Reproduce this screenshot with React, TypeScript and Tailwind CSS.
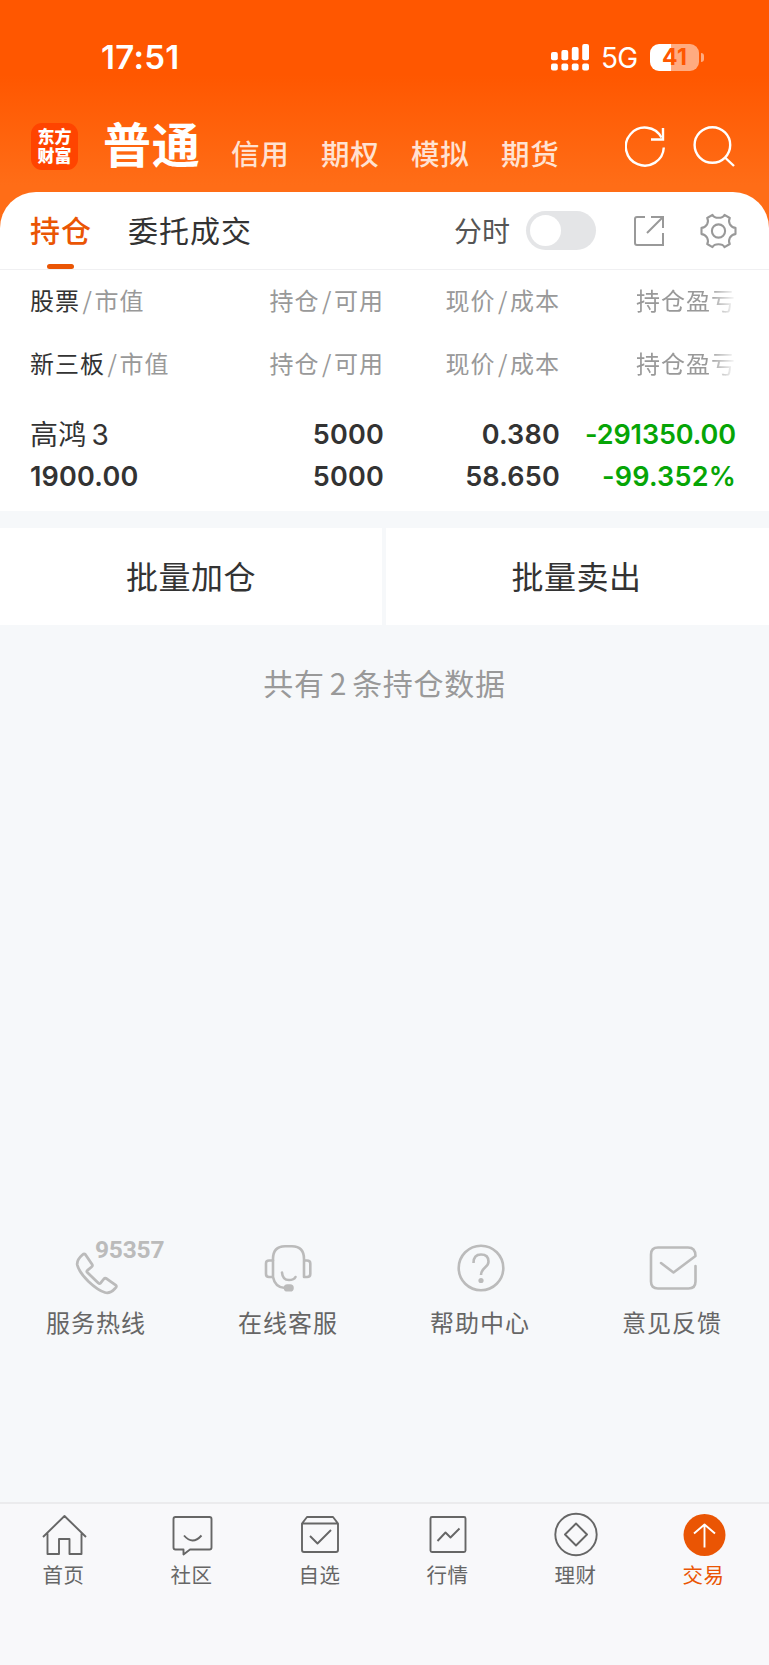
import { FC, ReactNode } from "react"
import clsx from "clsx"

const ACCOUNT_TABS = ["信用", "期权", "模拟", "期货"]

interface PositionHeaderProps {
  title: string
  className?: string
}

const SignalIcon = () => (
  <svg width="38" height="27" viewBox="0 0 38 27" fill="white">
    <rect x="0" y="8" width="6.8" height="8.2" rx="2" />
    <rect x="10.4" y="6" width="6.8" height="10.2" rx="2" />
    <rect x="20.8" y="3" width="6.8" height="13.2" rx="2" />
    <rect x="31.2" y="0" width="6.8" height="16.2" rx="2" />
    <rect x="0" y="19.5" width="6.8" height="7" rx="2" />
    <rect x="10.4" y="19.5" width="6.8" height="7" rx="2" />
    <rect x="20.8" y="19.5" width="6.8" height="7" rx="2" />
    <rect x="31.2" y="19.5" width="6.8" height="7" rx="2" />
  </svg>
)

const StatusBar = () => (
  <div className="flex h-[108px] items-start pt-[37px] pl-[101px] text-white">
    <div className="w-[450px] font-['Inter',sans-serif] text-[33px] leading-[41px] font-semibold tracking-[0.3px]">
      17:51
    </div>
    <div className="flex h-[41px] items-center">
      <SignalIcon />
      <span className="ml-[12px] w-[38px] pt-px font-['Inter',sans-serif] text-[28px] leading-[41px] tracking-[-0.7px]">
        5G
      </span>
      <div className="ml-[11px] flex h-[27px] w-[49px] items-center justify-center rounded-[9px] bg-[linear-gradient(90deg,#fff_42%,#ffab80_42%)] font-['Inter',sans-serif] text-[23px] leading-none font-bold tracking-[0.2px] text-[#ff5700]">
        41
      </div>
      <div className="ml-[1.5px] h-[9px] w-[3px] rounded-r-full bg-[#ffab80]" />
    </div>
  </div>
)

const AccountBar = () => (
  <div className="flex h-[84px] text-white">
    <div className="mt-[15px] ml-[31px] flex h-[47px] w-[47px] flex-col items-center rounded-[11px] bg-[#ff4400] pt-[3px] text-[17px] leading-[19px] font-black">
      <span className="h-[19px]">东方</span>
      <span className="h-[19px]">财富</span>
    </div>
    <h1 className="ml-[25px] w-[101px] text-[48px] leading-[69px] font-bold tracking-[0.8px]">普通</h1>
    <div className="flex gap-[30px] pl-[27px]">
      {ACCOUNT_TABS.map(tab => (
        <span key={tab} className="w-[60px] text-[28.5px] leading-[89px] font-medium tracking-[0.8px] text-[#ffe2d2]">
          {tab}
        </span>
      ))}
    </div>
    <div className="ml-[64px] flex gap-[26px] pt-[17px]">
      <svg width="42" height="42" viewBox="0 0 42 42" fill="none" stroke="white" strokeWidth="2.4">
        <path d="M38.8 22.5A19 19 0 1 1 36.5 12.5" />
        <path d="M38 3v11.5H26" />
      </svg>
      <svg width="42" height="42" viewBox="0 0 42 42" fill="none" stroke="white" strokeWidth="2.4">
        <circle cx="19.4" cy="20" r="17.8" />
        <path d="M32 32.5l9 8.5" />
      </svg>
    </div>
  </div>
)

const TabBar = () => (
  <div className="flex h-[78px] border-b border-[#f0f0f2] pl-[30px]">
    <div className="flex w-[62px] flex-col items-center">
      <span className="h-[69px] text-[30px] leading-[75px] font-medium tracking-[1px] whitespace-nowrap text-[#ea5504]">
        持仓
      </span>
      <span className="mt-[3px] mr-[1px] h-[5px] w-[27px] rounded-full bg-[#ea5504]" />
    </div>
    <span className="ml-[36px] w-[326px] text-[30px] leading-[75px] tracking-[1px] text-[#333]">委托成交</span>
    <span className="w-[72px] text-[28px] leading-[76px] text-[#555]">分时</span>
    <div className="mt-[19px] h-[39px] w-[70px] rounded-full bg-[#e4e5e7] p-1">
      <div className="h-[31px] w-[31px] rounded-full bg-white" />
    </div>
    <svg className="mt-[23px] ml-[37px]" width="32" height="32" viewBox="0 0 32 32" fill="none" stroke="#999" strokeWidth="2">
      <path d="M12 2H4a2 2 0 0 0-2 2v24a2 2 0 0 0 2 2h26V18" />
      <path d="M18 2h12v11M30 2L14 18" />
    </svg>
    <svg className="mt-[21px] ml-[35px]" width="37" height="36" viewBox="0 0 37 36" fill="none" stroke="#999" strokeWidth="2.1" strokeLinejoin="round">
      <path d="M12.500 1.900Q14 4.800 18.500 4.800Q23 4.800 24.500 1.900L29.800 5Q28.200 7.800 29.900 11.400Q32.300 14.900 35.500 14.900V21.100Q32.300 21.100 29.900 24.600Q28.200 28.200 29.800 31L24.500 34.100Q23 31.200 18.500 31.200Q14 31.200 12.500 34.100L7.200 31Q8.800 28.200 7.100 24.600Q4.700 21.100 1.500 21.100V14.900Q4.700 14.900 7.100 11.400Q8.800 7.800 7.200 5Z" />
      <circle cx="18.5" cy="18" r="6.6" />
    </svg>
  </div>
)

const Slash = () => <span className="mr-[1.500px] ml-[2.500px] inline-block">/</span>

const PositionHeader: FC<PositionHeaderProps> = ({ title, className }) => (
  <div
    className={clsx(
      "grid grid-cols-[178px_176px_176px_176px] pl-[30px] text-[24px] tracking-[1px] whitespace-nowrap text-[#999]",
      className
    )}
  >
    <div>
      <span className="text-[#333]">{title}</span>
      <Slash />
      市值
    </div>
    <div className="text-right">
      持仓
      <Slash />
      可用
    </div>
    <div className="text-right">
      现价
      <Slash />
      成本
    </div>
    <div className="text-right [mask-image:linear-gradient(90deg,#000_148px,transparent_177px)]">持仓盈亏</div>
  </div>
)

const PositionRow = () => (
  <div className="grid grid-cols-[178px_176px_176px_176px] pt-[18px] pb-[13px] pl-[30px] font-['Inter','Noto_Sans_CJK_SC',sans-serif] text-[27px] leading-[42px] font-semibold tracking-[0.200px] whitespace-nowrap text-[#333]">
    <div className="text-[28px] font-normal">
      高鸿<span className="ml-[5px]">3</span>
    </div>
    <div className="text-right">5000</div>
    <div className="text-right">0.380</div>
    <div className="text-right tracking-[-0.100px] text-[#06a506]">-291350.00</div>
    <div>1900.00</div>
    <div className="text-right">5000</div>
    <div className="text-right">58.650</div>
    <div className="text-right text-[#06a506]">-99.352%</div>
  </div>
)

interface EntryProps {
  label: string
  children: ReactNode
  active?: boolean
}

const ServiceEntry: FC<EntryProps> = ({ label, children }) => (
  <div className="flex flex-col items-center">
    <div className="flex h-[60px] items-center">{children}</div>
    <span className="mt-[6px] text-[24px] leading-[36px] tracking-[1px] text-[#666]">{label}</span>
  </div>
)

const ServiceEntries = () => (
  <div className="grid h-[264px] grid-cols-4 pr-[1px]">
    <ServiceEntry label="服务热线">
      <div className="relative h-[60px] w-[48px]">
        <svg className="mt-[14px] ml-[3px]" width="44" height="44" viewBox="0 0 44 44" fill="none" stroke="#bbb" strokeWidth="2.8" strokeLinejoin="round">
          <path d="M10.2 2.2Q9 1.4 7.5 2.8Q1.5 8 2.3 13Q4 20 13.5 29.5Q23 38.5 30 40.5Q35 42 40 36.5Q42.3 34.5 40.7 33.2L31.5 26.6Q30 25.8 28.8 27L25.5 31.2Q24.5 32 23.3 31L12.4 20.6Q11.3 19.5 12.4 18.4L16.5 15Q18 13.8 17 12.3Z" />
        </svg>
        <span className="absolute top-[-1px] left-[23px] font-['Roboto',sans-serif] text-[24.5px] leading-[26px] font-bold tracking-[-0.200px] text-[#bbb]">
          95357
        </span>
      </div>
    </ServiceEntry>
    <ServiceEntry label="在线客服">
      <svg width="48" height="48" viewBox="0 0 48 48" fill="none" stroke="#bbb" strokeWidth="2.6" strokeLinecap="round" strokeLinejoin="round">
        <path d="M9 16.500V15Q9 2.500 21 2.300H28Q40 2.500 40 15V33H43Q46.300 33 46.300 30V19.500Q46.300 16.500 43 16.500H40" />
        <path d="M9 16.500H5Q2 16.500 2 19.500V30Q2 33 5 33H9V16.500M9 33Q11 43.500 21 44" />
        <path d="M18 28.500Q18.500 36 25 36Q30 36 31.500 33" />
        <rect x="21" y="41.500" width="7.500" height="4.800" rx="2.400" fill="#bbb" />
      </svg>
    </ServiceEntry>
    <ServiceEntry label="帮助中心">
      <svg className="ml-[1px]" width="48" height="48" viewBox="0 0 48 48" fill="none" stroke="#bbb" strokeWidth="2.600">
        <circle cx="24" cy="24" r="22.300" />
        <path d="M16.500 19Q16.500 10.500 24 10.500Q31.500 10.500 31.500 17.500Q31.500 20.500 28.500 23Q24 27 24 31" />
        <circle cx="24" cy="36.500" r="2.600" fill="#bbb" stroke="none" />
      </svg>
    </ServiceEntry>
    <ServiceEntry label="意见反馈">
      <svg className="ml-[1px]" width="48" height="48" viewBox="0 0 48 48" fill="none" stroke="#bbb" strokeWidth="2.600" strokeLinecap="round" strokeLinejoin="round">
        <path d="M46.500 22V37.500Q46.500 44.500 39.500 44.500H9Q2 44.500 2 37.500V10.500Q2 3.500 9 3.500H39Q46.500 3.500 46.500 12L24.500 28.500L12 19" />
      </svg>
    </ServiceEntry>
  </div>
)

const NavItem: FC<EntryProps> = ({ label, children, active }) => (
  <div className="flex flex-col items-center">
    <svg width="46" height="46" viewBox="0 0 46 46" fill="none" stroke="#666" strokeWidth="1.900" strokeLinejoin="round">
      {children}
    </svg>
    <span
      className={clsx(
        "mt-[1px] mr-[1px] text-[20.500px] leading-[30px] tracking-[0.500px]",
        active ? "text-[#ea5504]" : "text-[#666]"
      )}
    >
      {label}
    </span>
  </div>
)

const BottomNav = () => (
  <nav className="grid h-[163px] grid-cols-6 border-t-2 border-[#ebebed] bg-[#f8f8fa] pt-[8px] pr-[1px]">
    <NavItem label="首页">
      <path d="M2 25L23.500 4L45 25M6.500 21.500V42H18V27H28.500V42H40.500V21.500" />
    </NavItem>
    <NavItem label="社区">
      <path d="M6.500 5H40.500Q42.500 5 42.500 7V35.500Q42.500 37.500 40.500 37.500H21L14.500 42.500V37.500H6.500Q4.500 37.500 4.500 35.500V7Q4.500 5 6.500 5Z" />
      <path d="M15 23.500Q23.500 33.500 32.500 23.500" />
    </NavItem>
    <NavItem label="自选">
      <path d="M5 11.500L10 5H36L41 11.500V38Q41 40 39 40H7Q5 40 5 38ZM5 11.500H41" />
      <path d="M13 24L20.500 31.500L34 18" />
    </NavItem>
    <NavItem label="行情">
      <rect x="5.500" y="5" width="35" height="35" rx="1.500" />
      <path d="M12.500 29L20.500 20.500L25.500 25.500L34.500 16.500" />
    </NavItem>
    <NavItem label="理财">
      <circle cx="23" cy="22.500" r="20.700" />
      <path d="M23 11.500L34 22.500L23 33.500L12 22.500Z" />
    </NavItem>
    <NavItem label="交易" active>
      <circle cx="23.500" cy="23" r="21" fill="#ea5504" stroke="none" />
      <path d="M23.500 35.500V13M13 21.500L23.500 12.500L34 21.500" stroke="white" />
    </NavItem>
  </nav>
)

export default function App() {
  return (
    <div className="flex h-[1665px] w-[769px] flex-col overflow-hidden bg-[#f6f8fa] font-['Noto_Sans_CJK_SC',sans-serif]">
      <div className="bg-[linear-gradient(180deg,#ff5700_75px,#ff6d17_185px)]">
        <StatusBar />
        <AccountBar />
        <div className="h-[319px] rounded-t-[36px] bg-white">
          <TabBar />
          <PositionHeader title="股票" className="h-[64px] leading-[60px]" />
          <PositionHeader title="新三板" className="h-[62px] leading-[58px]" />
          <PositionRow />
        </div>
      </div>

      <div className="mt-[17px] grid h-[97px] grid-cols-[382px_383px] gap-[4px] text-center text-[32px] leading-[94px] tracking-[0.500px] text-[#333]">
        <button className="bg-white pb-[3px]">批量加仓</button>
        <button className="bg-white pr-[2px] pb-[3px]">批量卖出</button>
      </div>

      <p className="mt-[28px] h-[60px] text-center text-[30px] leading-[58px] tracking-[0.700px] text-[#999]">
        共有<span className="mx-[5px]">2</span>条持仓数据
      </p>

      <div className="flex-1" />
      <ServiceEntries />
      <BottomNav />
    </div>
  )
}
